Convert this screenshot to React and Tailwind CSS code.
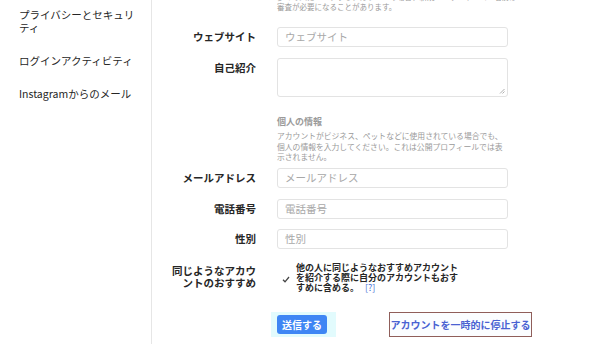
import React from "react";

const font = { fontFamily: '"Noto Sans CJK JP", "Noto Sans", sans-serif' };

function Row({ label, children, labelClass = "leading-[20px]", className = "" }) {
  return (
    <div className={"flex items-start " + className}>
      <div className={"w-[104px] shrink-0 text-right font-bold text-[10.5px] text-[#262626] " + labelClass}>
        {label}
      </div>
      <div className="ml-[21px] w-[231px] shrink-0">{children}</div>
    </div>
  );
}

function Input({ placeholder }) {
  return (
    <div className="h-[20px] w-full rounded-[3px] border border-[#e3e3e3] bg-white px-[7px] text-[10.5px] leading-[18px] text-[#a8a8a8]">
      {placeholder}
    </div>
  );
}

export default function App() {
  return (
    <div className="flex h-[344px] w-[600px] overflow-hidden bg-white" style={font}>
      <div className="flex w-[152px] shrink-0 flex-col gap-[20px] border-r border-[#e6e6e6] pl-[19px] pr-[14px] pt-[8px] text-[10.5px] leading-[13px] text-[#262626]">
        <div>プライバシーとセキュリティ</div>
        <div>ログインアクティビティ</div>
        <div>Instagramからのメール</div>
      </div>
      <div className="flex flex-1 flex-col overflow-hidden">
        <Row label="" className="mt-[-8px]">
          <div className="whitespace-nowrap text-[7.5px] leading-[10px] text-[#9a9a9a]">
            <div>多くの人にリーチするアカウントの場合、新規ユーザーネーム・名前は</div>
            <div>審査が必要になることがあります。</div>
          </div>
        </Row>
        <Row label="ウェブサイト" className="mt-[15px]">
          <Input placeholder="ウェブサイト" />
        </Row>
        <Row label="自己紹介" labelClass="leading-[13px] pt-[3px]" className="mt-[11px]">
          <div className="relative h-[39px] w-full rounded-[3px] border border-[#e3e3e3] bg-white">
            <svg className="absolute bottom-[2px] right-[2px]" width="6" height="6" viewBox="0 0 6 6">
              <path d="M5.5 1 L1 5.5 M5.5 3.5 L3.5 5.5" stroke="#9a9a9a" strokeWidth="0.8" />
            </svg>
          </div>
        </Row>
        <Row label="" className="mt-[19px]">
          <div className="text-[9px] font-bold leading-[12px] text-[#9a9a9a]">個人の情報</div>
          <div className="mt-[3px] whitespace-nowrap text-[7.8px] leading-[10.5px] text-[#9a9a9a]">
            アカウントがビジネス、ペットなどに使用されている場合でも、
            <br />
            個人の情報を入力してください。これは公開プロフィールでは表
            <br />
            示されません。
          </div>
        </Row>
        <Row label="メールアドレス" className="mt-[5px]">
          <Input placeholder="メールアドレス" />
        </Row>
        <Row label="電話番号" className="mt-[11px]">
          <Input placeholder="電話番号" />
        </Row>
        <Row label="性別" className="mt-[10px]">
          <Input placeholder="性別" />
        </Row>
        <Row
          label={
            <span>
              同じようなアカウ
              <br />
              ントのおすすめ
            </span>
          }
          labelClass="leading-[12px] pt-[2px]"
          className="mt-[14px]"
        >
          <div className="flex items-start">
            <div className="ml-[4px] mt-[12px] flex h-[10px] w-[10px] items-center justify-center">
              <svg width="8" height="7" viewBox="0 0 8 7">
                <path d="M1 3.8 L3 5.8 L7 1" fill="none" stroke="#444" strokeWidth="1.3" />
              </svg>
            </div>
            <div className="ml-[5px] whitespace-nowrap text-[9px] font-bold leading-[10px] text-[#262626]">
              他の人に同じようなおすすめアカウント
              <br />
              を紹介する際に自分のアカウントもおす
              <br />
              すめに含める。
              <span className="ml-[6px] font-normal text-[#4a6fd6]">[?]</span>
            </div>
          </div>
        </Row>
        <Row label="" className="mt-[19px]">
          <div className="flex items-center">
            <div className="ml-[-6px] flex shrink-0 items-center bg-[#e2fbfd] py-[3px] pl-[6px] pr-[9px]">
              <button className="h-[19px] whitespace-nowrap rounded-[3px] bg-[#3f86f4] px-[5px] text-[10px] font-bold leading-[19px] text-white">
                送信する
              </button>
            </div>
            <div className="ml-[53px] shrink-0 bg-[#fdf4f9] p-0">
              <div className="h-[25px] w-[143px] whitespace-nowrap border border-[#8f5e5a] bg-[#fbfdff] text-center text-[10px] font-bold leading-[23px] text-[#4a62d2]">
                アカウントを一時的に停止する
              </div>
            </div>
          </div>
        </Row>
      </div>
    </div>
  );
}
